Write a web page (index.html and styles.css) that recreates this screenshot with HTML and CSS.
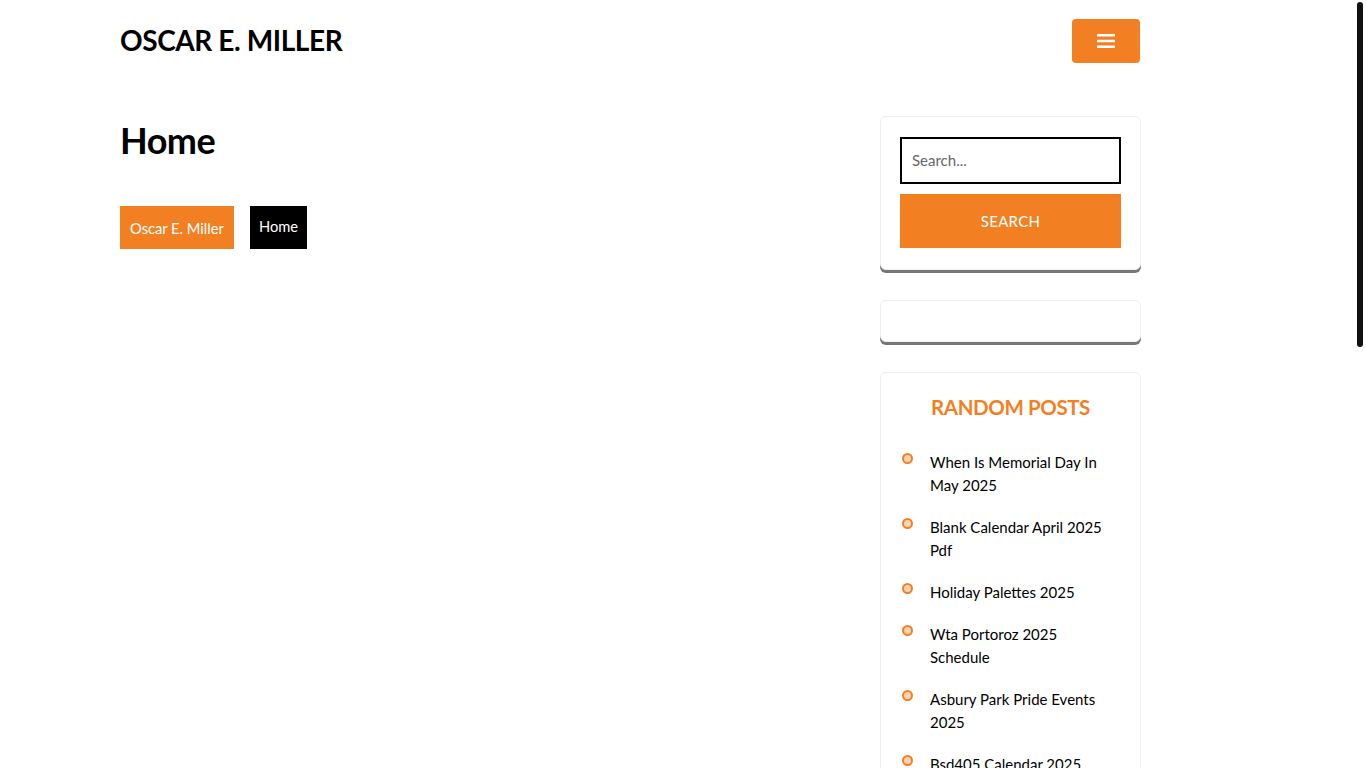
FILE: index.html
```html
<!DOCTYPE html>
<html lang="en">
<head>
<meta charset="utf-8">
<title>Home - Oscar E. Miller</title>
<link rel="stylesheet" href="styles.css">
</head>
<body>
<div class="container">
  <header class="site-header">
    <a class="logo" href="#">OSCAR E. MILLER</a>
    <button class="menu-btn" aria-label="Menu">
      <svg width="18" height="16" viewBox="0 0 18 16"><rect x="0" y="1" width="18" height="2.6" rx="0.5" fill="#fff"/><rect x="0" y="6.7" width="18" height="2.6" rx="0.5" fill="#fff"/><rect x="0" y="12.4" width="18" height="2.6" rx="0.5" fill="#fff"/></svg>
    </button>
  </header>
  <div class="layout">
    <main class="main">
      <h1 class="page-title">Home</h1>
      <nav class="breadcrumb">
        <a class="crumb crumb-home" href="#">Oscar E. Miller</a>
        <span class="crumb crumb-current">Home</span>
      </nav>
    </main>
    <aside class="sidebar">
      <section class="card search-card">
        <input class="search-input" type="text" placeholder="Search...">
        <button class="search-btn">SEARCH</button>
      </section>
      <section class="card empty-card"></section>
      <section class="card posts-card">
        <h2 class="card-title">RANDOM POSTS</h2>
        <ul class="posts">
          <li><a href="#">When Is Memorial Day In May 2025</a></li>
          <li><a href="#">Blank Calendar April 2025 Pdf</a></li>
          <li><a href="#">Holiday Palettes 2025</a></li>
          <li><a href="#">Wta Portoroz 2025 Schedule</a></li>
          <li><a href="#">Asbury Park Pride Events 2025</a></li>
          <li><a href="#">Bsd405 Calendar 2025</a></li>
          <li><a href="#">Easter Dates 2025 Uk</a></li>
          <li><a href="#">Printable Calendar June 2025</a></li>
          <li><a href="#">Nfl Draft Order 2025 Round 1</a></li>
          <li><a href="#">March Madness 2025 Bracket Printable</a></li>
          <li><a href="#">Chinese New Year 2025 Animal</a></li>
          <li><a href="#">Super Bowl 2025 Halftime Show</a></li>
          <li><a href="#">Mothers Day 2025 Date</a></li>
          <li><a href="#">School Holidays 2025 Calendar</a></li>
          <li><a href="#">Ramadan 2025 Start Date</a></li>
        </ul>
      </section>
    </aside>
  </div>
</div>
<div class="scroll-thumb" aria-hidden="true"></div>
</body>
</html>
```

FILE: styles.css
```css
* { box-sizing: border-box; }
html { scrollbar-width: none; }
::-webkit-scrollbar { width: 0; height: 0; }
body {
  margin: 0;
  font-family: "Lato", "Noto Sans", sans-serif;
  color: #000;
  background: #fff;
}
a { text-decoration: none; color: inherit; }
.scroll-thumb {
  position: fixed;
  top: 2px;
  right: 3px;
  width: 6px;
  height: 345px;
  background: #111;
  border-radius: 3px;
}
.container {
  width: 1021px;
  margin-left: 120px;
}
.site-header {
  display: flex;
  justify-content: space-between;
  align-items: center;
  height: 81px;
}
.logo {
  font-size: 28px;
  font-weight: 700;
  letter-spacing: -0.4px;
  color: #000;
  margin-top: -2px;
}
.menu-btn {
  width: 68px;
  height: 44px;
  margin-right: 1px;
  background: #f28023;
  border: 0;
  border-radius: 4px;
  display: flex;
  align-items: center;
  justify-content: center;
  padding: 0;
}
.layout {
  display: flex;
  justify-content: space-between;
  padding-top: 35px;
}
.main { flex: 1; }
.page-title {
  margin: 0;
  font-size: 36px;
  font-weight: 700;
  line-height: 48px;
  letter-spacing: -0.5px;
}
.breadcrumb {
  display: flex;
  gap: 16px;
  margin-top: 42px;
}
.crumb {
  height: 43px;
  display: flex;
  align-items: center;
  padding: 0 10px 2px;
  color: #fff;
  font-size: 14.7px;
}
.crumb-home { background: #f28023; padding-bottom: 0; }
.crumb-current { background: #000; padding: 0 9px 3px; }
.sidebar {
  width: 261px;
  display: flex;
  flex-direction: column;
  gap: 30px;
}
.card {
  border: 1px solid #eee;
  border-radius: 6px;
  background: #fff;
  box-shadow: 0 3px 0 #777;
}
.search-card {
  padding: 20px 19px;
  display: flex;
  flex-direction: column;
  gap: 10px;
}
.search-input {
  height: 47px;
  border: 2px solid #000;
  padding: 0 10px 2px;
  font-family: inherit;
  font-size: 15px;
  outline: none;
}
.search-input::placeholder { color: #666; }
.search-btn {
  height: 54px;
  background: #f28023;
  color: #fff;
  border: 0;
  font-family: inherit;
  font-size: 15px;
  letter-spacing: 0.3px;
  margin-bottom: 1px;
  padding-bottom: 2px;
}
.empty-card { height: 42px; }
.posts-card {
  padding: 21px 19px 20px 19px;
  box-shadow: none;
}
.card-title {
  margin: 0;
  text-align: center;
  color: #f28023;
  font-size: 20.5px;
  font-weight: 700;
  line-height: 26px;
  letter-spacing: -0.4px;
}
.posts {
  list-style: none;
  margin: 31px 0 0;
  padding: 0;
  display: flex;
  flex-direction: column;
  gap: 19px;
}
.posts li {
  position: relative;
  padding-left: 30px;
  padding-right: 10px;
  font-size: 15px;
  line-height: 23px;
}
.posts li::before {
  content: "";
  position: absolute;
  left: 2px;
  top: 2px;
  width: 7px;
  height: 7px;
  border: 2px solid #f28023;
  background: #fbd3b0;
  border-radius: 50%;
}
```
